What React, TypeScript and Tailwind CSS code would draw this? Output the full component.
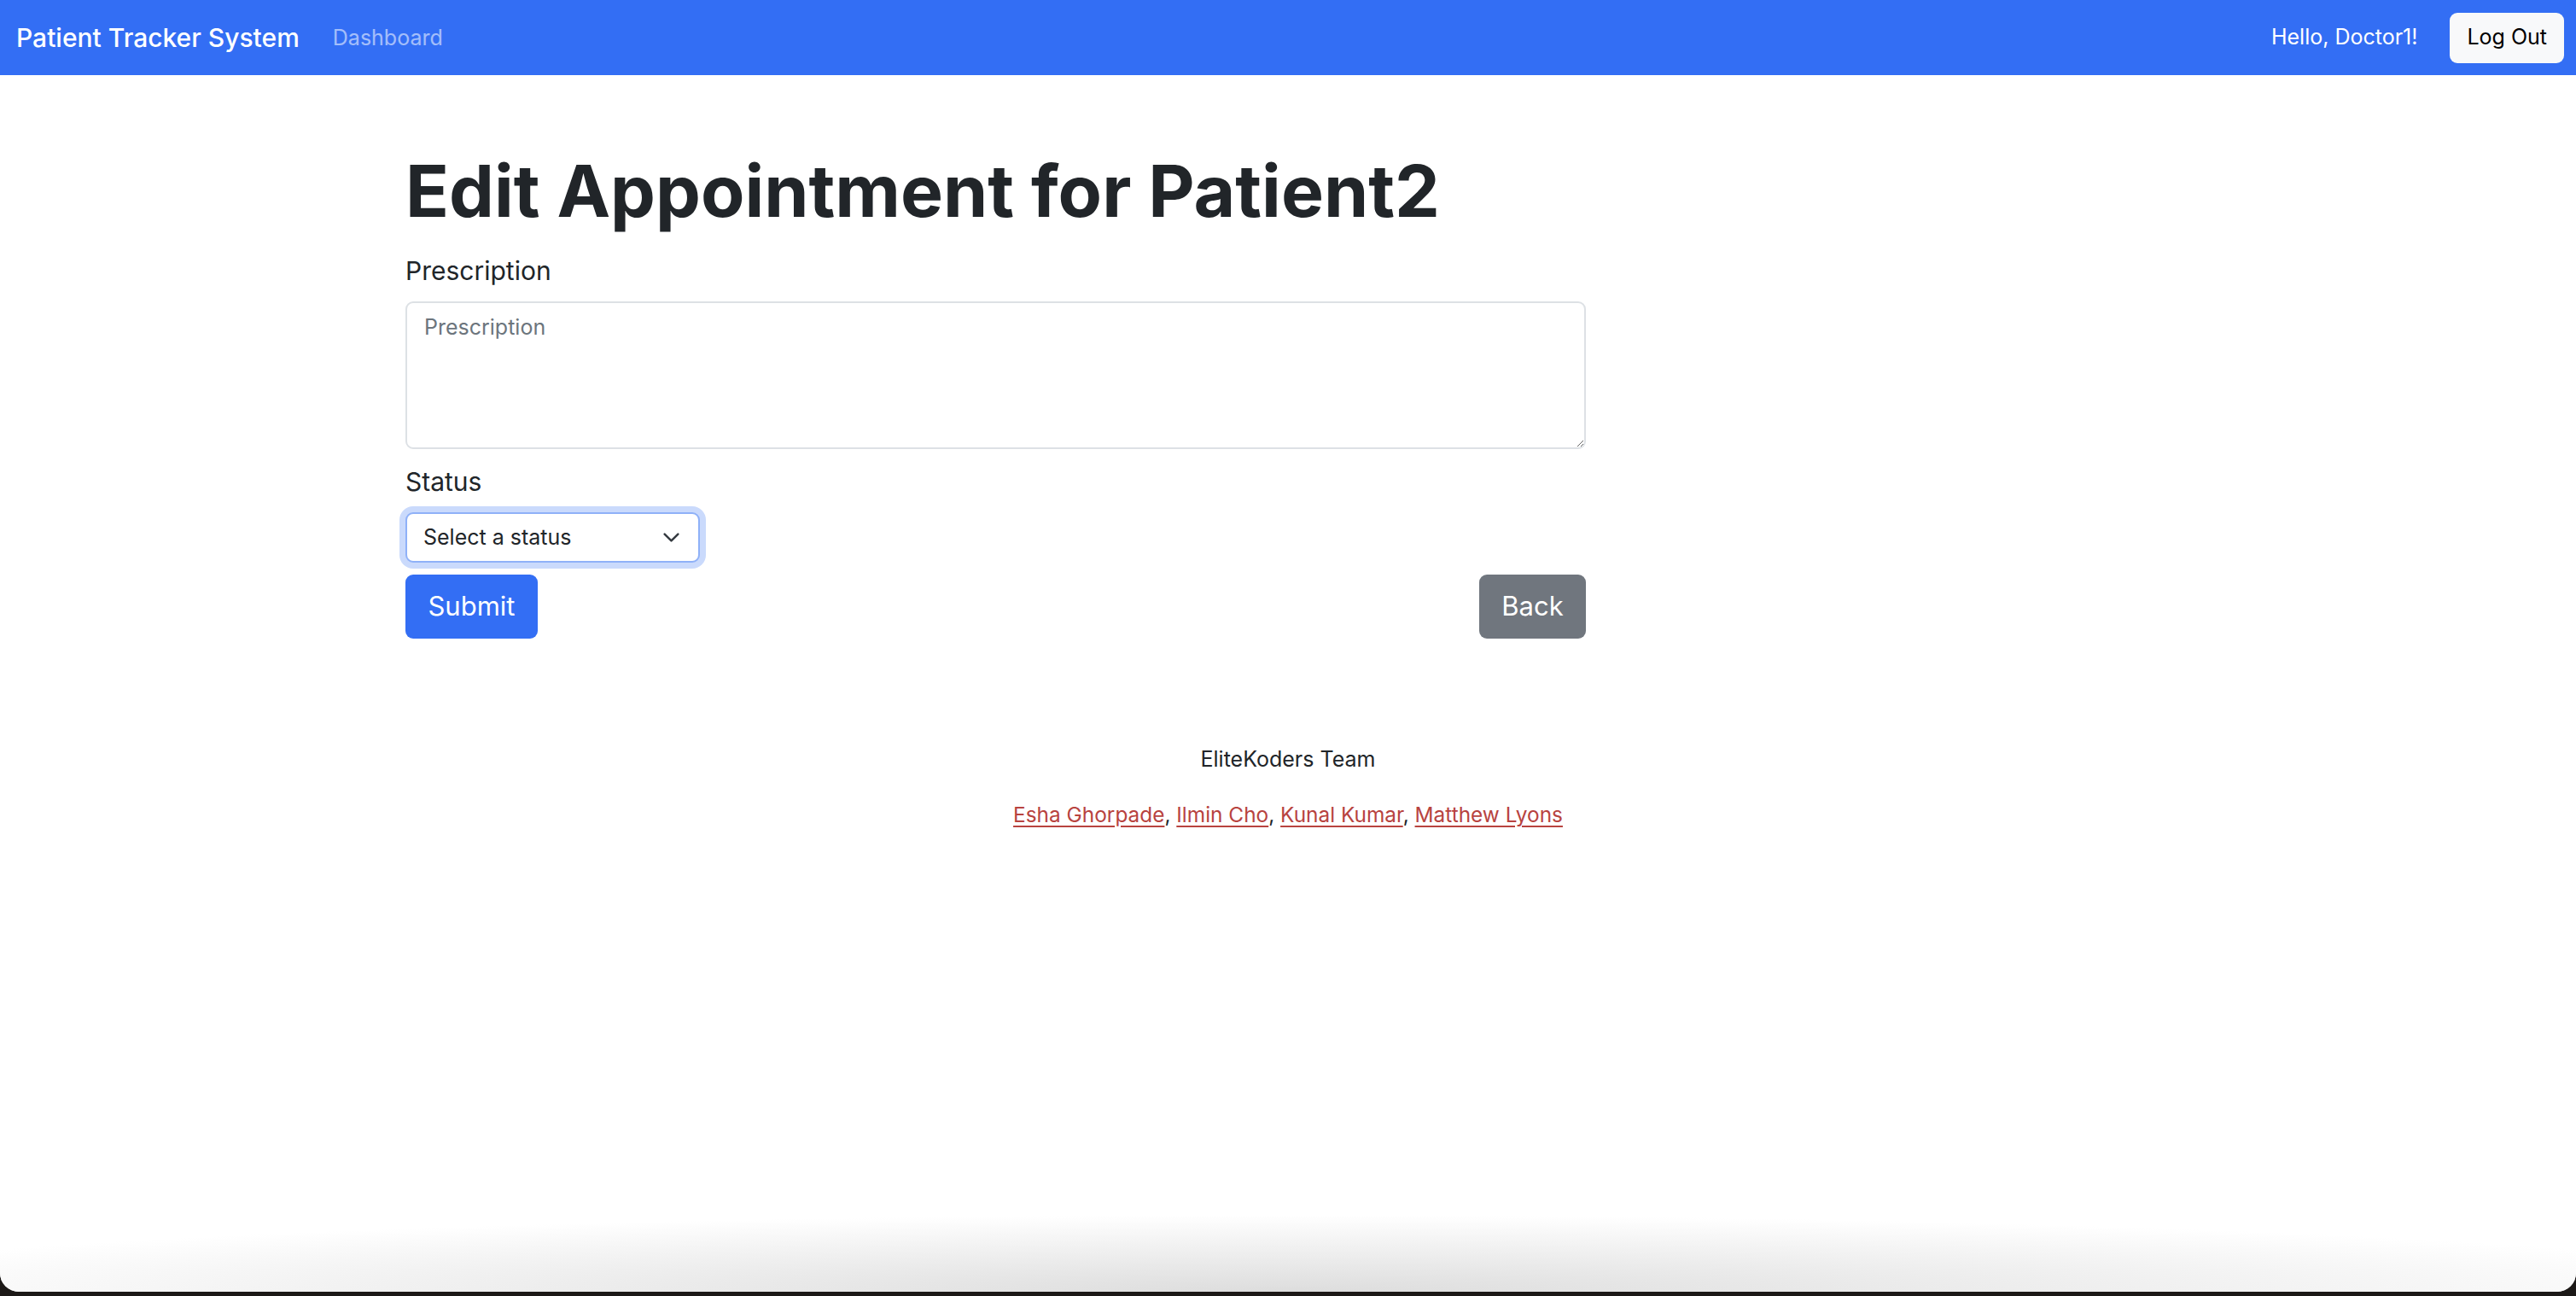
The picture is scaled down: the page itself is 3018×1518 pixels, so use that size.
import React from 'react';

const team = ['Esha Ghorpade', 'Ilmin Cho', 'Kunal Kumar', 'Matthew Lyons'];

const Navbar: React.FC = () => (
  <nav className="flex h-[88px] items-center bg-[#336ef4] pl-[19px] pr-[14px]">
    <span className="text-[30px] font-medium text-white">Patient Tracker System</span>
    <a href="#" className="ml-[39px] mt-[2px] text-[25px] text-white/55">
      Dashboard
    </a>
    <div className="ml-auto flex items-center gap-[38px]">
      <span className="text-[25px] text-white">Hello, Doctor1!</span>
      <button className="h-[59px] rounded-[9px] bg-[#f8f9fa] px-[20px] text-[25px] text-black">
        Log Out
      </button>
    </div>
  </nav>
);

const EditForm: React.FC = () => (
  <div className="ml-[475px] w-[1383px] pt-[86px]">
    <h1 className="mb-[20px] text-[84px] font-bold leading-[1.2] text-[#212529]">
      Edit Appointment for Patient2
    </h1>
    <label className="mb-[13px] block text-[30px] leading-[1.5] text-[#212529]">Prescription</label>
    <textarea
      placeholder="Prescription"
      className="block h-[173px] w-full rounded-[9px] border-2 border-[#dde1e5] px-[20px] py-[10px] text-[25px] leading-[1.5] text-[#212529] placeholder:text-[#6c757d]"
    />
    <label className="mb-[13px] mt-[16px] block text-[30px] leading-[1.5] text-[#212529]">Status</label>
    <div className="relative w-[345px]">
      <select
        defaultValue=""
        className="block h-[59px] w-full appearance-none rounded-[9px] border-2 border-[#8fb1f8] bg-white pl-[19px] text-[25px] text-[#212529] outline-none ring-[7px] ring-[#cadafc]"
      >
        <option value="">Select a status</option>
        <option value="scheduled">Scheduled</option>
        <option value="completed">Completed</option>
        <option value="cancelled">Cancelled</option>
      </select>
      <svg
        className="pointer-events-none absolute right-[23px] top-[19px] h-[21px] w-[21px]"
        viewBox="0 0 16 16"
        fill="none"
        stroke="#343a40"
        strokeWidth="1.9"
        strokeLinecap="round"
        strokeLinejoin="round"
      >
        <path d="M2 5l6 6 6-6" />
      </svg>
    </div>
    <div className="mt-[14px] flex justify-between">
      <button className="h-[75px] w-[155px] rounded-[9px] bg-[#336ef4] text-[31px] text-white">Submit</button>
      <button className="h-[75px] w-[125px] rounded-[9px] bg-[#70767e] text-[31px] text-white">Back</button>
    </div>
  </div>
);

const Footer: React.FC = () => (
  <footer className="mt-[123px] text-center leading-[1.5] text-[#212529]">
    <p className="mb-[28px] text-[25px]">EliteKoders Team</p>
    <p className="text-[24.4px]">
      {team.map((name, i) => (
        <React.Fragment key={name}>
          <a href="#" className="text-[#b8433f] underline underline-offset-[4px]">
            {name}
          </a>
          {i < team.length - 1 && ', '}
        </React.Fragment>
      ))}
    </p>
  </footer>
);

export default function App() {
  return (
    <div className="flex h-[1518px] flex-col bg-[#1c1917] pb-[5px] font-['Inter',sans-serif]">
      <div className="flex flex-1 flex-col overflow-hidden rounded-b-[22px] bg-white">
        <Navbar />
        <main>
          <EditForm />
          <Footer />
        </main>
        <div className="mt-auto h-[90px] bg-[radial-gradient(ellipse_60%_100%_at_50%_100%,#dddddd,#ffffff)]" />
      </div>
    </div>
  );
}
